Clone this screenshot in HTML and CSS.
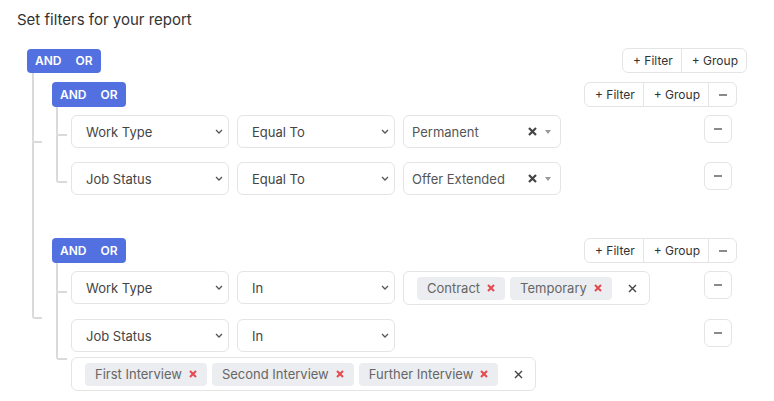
FILE: index.html
```html
<!DOCTYPE html>
<html lang="en">
<head>
    <meta charset="UTF-8">
    <meta name="viewport" content="width=device-width, initial-scale=1.0">
    <title>Report filters</title>
    <link rel="stylesheet" href="styles.css">
</head>
<body>
    <h1 class="title">Set filters for your report</h1>

    <div class="group root">
        <div class="group-head">
            <div class="combinator"><button>AND</button><button>OR</button></div>
            <div class="actions"><button>+ Filter</button><button>+ Group</button></div>
        </div>
        <div class="group-body">

            <!-- first group -->
            <div class="group node">
                <div class="group-head">
                    <div class="combinator"><button>AND</button><button>OR</button></div>
                    <div class="actions">
                        <button>+ Filter</button><button>+ Group</button>
                        <button class="dash"><span></span></button>
                    </div>
                </div>
                <div class="group-body">
                    <div class="rule node">
                        <div class="fields">
                            <div class="select">Work Type
                                <svg width="8" height="5" viewBox="0 0 8 5"><path d="M1 1l3 3 3-3" fill="none" stroke="#555" stroke-width="1.3"/></svg>
                            </div>
                            <div class="select">Equal To
                                <svg width="8" height="5" viewBox="0 0 8 5"><path d="M1 1l3 3 3-3" fill="none" stroke="#555" stroke-width="1.3"/></svg>
                            </div>
                            <div class="value">
                                <span>Permanent</span>
                                <span class="value-icons">
                                    <svg width="9" height="9" viewBox="0 0 9 9"><path d="M1 1l7 7M8 1l-7 7" stroke="#444" stroke-width="2.2"/></svg>
                                    <svg width="6" height="4" viewBox="0 0 6 4"><path d="M0 0h6L3 4z" fill="#999"/></svg>
                                </span>
                            </div>
                        </div>
                        <button class="remove"><span></span></button>
                    </div>
                    <div class="rule node">
                        <div class="fields">
                            <div class="select">Job Status
                                <svg width="8" height="5" viewBox="0 0 8 5"><path d="M1 1l3 3 3-3" fill="none" stroke="#555" stroke-width="1.3"/></svg>
                            </div>
                            <div class="select">Equal To
                                <svg width="8" height="5" viewBox="0 0 8 5"><path d="M1 1l3 3 3-3" fill="none" stroke="#555" stroke-width="1.3"/></svg>
                            </div>
                            <div class="value">
                                <span>Offer Extended</span>
                                <span class="value-icons">
                                    <svg width="9" height="9" viewBox="0 0 9 9"><path d="M1 1l7 7M8 1l-7 7" stroke="#444" stroke-width="2.2"/></svg>
                                    <svg width="6" height="4" viewBox="0 0 6 4"><path d="M0 0h6L3 4z" fill="#999"/></svg>
                                </span>
                            </div>
                        </div>
                        <button class="remove"><span></span></button>
                    </div>
                </div>
            </div>

            <!-- second group -->
            <div class="group node">
                <div class="group-head">
                    <div class="combinator"><button>AND</button><button>OR</button></div>
                    <div class="actions">
                        <button>+ Filter</button><button>+ Group</button>
                        <button class="dash"><span></span></button>
                    </div>
                </div>
                <div class="group-body">
                    <div class="rule node">
                        <div class="fields">
                            <div class="select">Work Type
                                <svg width="8" height="5" viewBox="0 0 8 5"><path d="M1 1l3 3 3-3" fill="none" stroke="#555" stroke-width="1.3"/></svg>
                            </div>
                            <div class="select">In
                                <svg width="8" height="5" viewBox="0 0 8 5"><path d="M1 1l3 3 3-3" fill="none" stroke="#555" stroke-width="1.3"/></svg>
                            </div>
                            <div class="multi">
                                <span class="chip">Contract
                                    <svg width="8" height="8" viewBox="0 0 8 8"><path d="M1 1l6 6M7 1l-6 6" stroke="#e5484d" stroke-width="2"/></svg>
                                </span>
                                <span class="chip">Temporary
                                    <svg width="8" height="8" viewBox="0 0 8 8"><path d="M1 1l6 6M7 1l-6 6" stroke="#e5484d" stroke-width="2"/></svg>
                                </span>
                                <svg class="clear" width="9" height="9" viewBox="0 0 9 9"><path d="M1 1l7 7M8 1l-7 7" stroke="#444" stroke-width="1.4"/></svg>
                            </div>
                        </div>
                        <button class="remove"><span></span></button>
                    </div>
                    <div class="rule node">
                        <div class="fields">
                            <div class="select">Job Status
                                <svg width="8" height="5" viewBox="0 0 8 5"><path d="M1 1l3 3 3-3" fill="none" stroke="#555" stroke-width="1.3"/></svg>
                            </div>
                            <div class="select">In
                                <svg width="8" height="5" viewBox="0 0 8 5"><path d="M1 1l3 3 3-3" fill="none" stroke="#555" stroke-width="1.3"/></svg>
                            </div>
                            <div class="multi">
                                <span class="chip">First Interview
                                    <svg width="8" height="8" viewBox="0 0 8 8"><path d="M1 1l6 6M7 1l-6 6" stroke="#e5484d" stroke-width="2"/></svg>
                                </span>
                                <span class="chip">Second Interview
                                    <svg width="8" height="8" viewBox="0 0 8 8"><path d="M1 1l6 6M7 1l-6 6" stroke="#e5484d" stroke-width="2"/></svg>
                                </span>
                                <span class="chip">Further Interview
                                    <svg width="8" height="8" viewBox="0 0 8 8"><path d="M1 1l6 6M7 1l-6 6" stroke="#e5484d" stroke-width="2"/></svg>
                                </span>
                                <svg class="clear" width="9" height="9" viewBox="0 0 9 9"><path d="M1 1l7 7M8 1l-7 7" stroke="#444" stroke-width="1.4"/></svg>
                            </div>
                        </div>
                        <button class="remove"><span></span></button>
                    </div>
                </div>
            </div>

        </div>
    </div>
</body>
</html>
```

FILE: styles.css
```css
body {
    margin: 0;
    background: #fff;
    font-family: Inter, 'Noto Sans', sans-serif;
    color: #444;
}

button {
    font-family: inherit;
    cursor: pointer;
}

.title {
    margin: 10px 0 18px 17px;
    font-size: 15px;
    line-height: 20px;
    font-weight: 400;
    color: #333;
}

/* groups */
.root {
    width: 720px;
    margin-left: 27px;
}

.group-head {
    display: flex;
    justify-content: space-between;
    align-items: center;
}

.group-body {
    display: flex;
    flex-direction: column;
}

.root > .group-body {
    padding: 9px 10px 0 25px;
    gap: 36px;
}

.group .group .group-body {
    padding: 8px 5px 0 19px;
}

.group .group .rule + .rule {
    margin-top: 7px;
}

/* AND / OR switch */
.combinator {
    display: flex;
    background: #5270e0;
    border-radius: 4px;
}

.combinator button {
    height: 25px;
    padding: 0 8px 0 7px;
    border: none;
    background: none;
    color: #fff;
    font-size: 12px;
    font-weight: 600;
}

.combinator button:first-child {
    padding: 0 7px 0 8px;
}

.root > .group-head .combinator button {
    height: 24px;
}

/* + Filter / + Group / - */
.actions {
    display: flex;
    border: 1px solid #e4e4e4;
    border-radius: 6px;
    background: #fff;
}

.actions button {
    height: 23px;
    padding: 0 8px 0 10px;
    border: none;
    border-left: 1px solid #e4e4e4;
    background: none;
    color: #333;
    font-size: 12px;
}

.actions button:first-child {
    border-left: none;
}

.actions .dash {
    width: 28px;
    padding: 0;
    display: flex;
    align-items: center;
    justify-content: center;
}

.dash span, .remove span {
    display: block;
    width: 8px;
    height: 2px;
    background: #8a8a8a;
}

/* tree connectors */
.node {
    position: relative;
}

.node::before {
    content: '';
    position: absolute;
    box-sizing: border-box;
    border-left: 2px solid #dadada;
    border-bottom: 2px solid #dadada;
    border-bottom-left-radius: 3px;
}

.node::after {
    content: '';
    position: absolute;
    border-left: 2px solid #dadada;
    top: 50%;
    bottom: 0;
}

.node:last-child::after {
    display: none;
}

.root > .group-body > .node::before {
    left: -20px;
    width: 10px;
    top: -36px;
    height: calc(50% + 37px);
}

.root > .group-body > .node:first-child::before {
    top: -9px;
    height: calc(50% + 10px);
}

.root > .group-body > .node::after {
    left: -20px;
}

.group .group .rule::before {
    left: -15px;
    width: 11px;
    top: -7px;
    height: calc(50% + 8px);
}

.group .group .rule:first-child::before {
    top: -8px;
    height: calc(50% + 9px);
}

.group .group .rule::after {
    left: -15px;
}

/* rules */
.rule {
    display: flex;
    align-items: flex-start;
    padding-bottom: 7px;
}

.fields {
    flex: 1;
    display: flex;
    flex-wrap: wrap;
    gap: 5px 8px;
}

.select, .value, .multi {
    box-sizing: border-box;
    display: flex;
    align-items: center;
    border: 1px solid #e4e4e4;
    border-radius: 6px;
    background: #fff;
    font-size: 13px;
}

.select {
    width: 158px;
    height: 33px;
    justify-content: space-between;
    padding: 0 5px 0 14px;
    color: #444;
}

.value {
    width: 158px;
    height: 33px;
    justify-content: space-between;
    padding: 0 9px 0 8px;
    color: #555;
}

.value-icons {
    display: flex;
    align-items: center;
    gap: 8px;
}

.multi {
    height: 34px;
    padding: 0 12px 0 13px;
    gap: 5px;
}

.chip {
    display: flex;
    align-items: center;
    gap: 7px;
    height: 23px;
    padding: 0 10px 0 10px;
    background: #ebedf0;
    border-radius: 4px;
    color: #666;
}

.multi .clear {
    margin-left: 11px;
}

.remove {
    width: 28px;
    height: 28px;
    margin-left: 8px;
    padding: 0;
    display: flex;
    align-items: center;
    justify-content: center;
    border: 1px solid #e4e4e4;
    border-radius: 6px;
    background: #fff;
}
```
